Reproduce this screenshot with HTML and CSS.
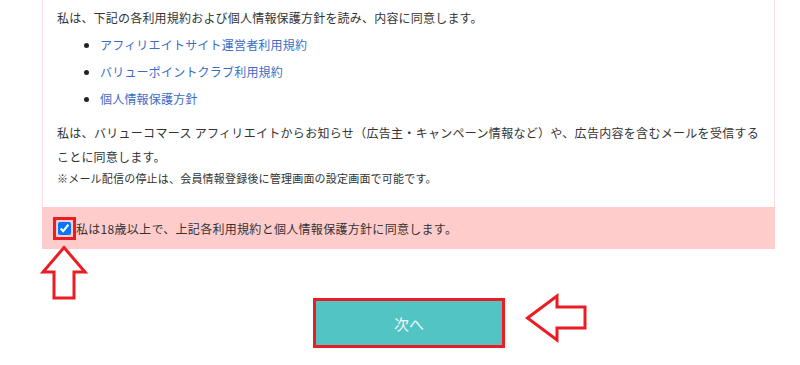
FILE: index.html
```html
<!DOCTYPE html>
<html lang="ja">
<head>
<meta charset="utf-8">
<link rel="stylesheet" href="styles.css">
</head>
<body>
<div class="page">
  <div class="panel">
    <div class="content">
      <p class="lead">私は、下記の各利用規約および個人情報保護方針を読み、内容に同意します。</p>
      <ul class="links">
        <li><a href="#">アフィリエイトサイト運営者利用規約</a></li>
        <li><a href="#">バリューポイントクラブ利用規約</a></li>
        <li><a href="#">個人情報保護方針</a></li>
      </ul>
      <p class="mail">私は、バリューコマース アフィリエイトからお知らせ（広告主・キャンペーン情報など）や、広告内容を含むメールを受信することに同意します。</p>
      <p class="note">※メール配信の停止は、会員情報登録後に管理画面の設定画面で可能です。</p>
    </div>
    <label class="agree">
      <input type="checkbox" class="check" checked>
      <span class="agree-text">私は18歳以上で、上記各利用規約と個人情報保護方針に同意します。</span>
    </label>
    <div class="actions">
      <button class="next" type="button">次へ</button>
    </div>
  </div>
  <svg class="arrow-up" width="50" height="60" viewBox="40 244 50 60">
    <polygon points="64,247.5 85,272 74,272 74,298 54,298 54,272 43,272" fill="#fff" stroke="#ec1c24" stroke-width="3" stroke-linejoin="miter"/>
  </svg>
  <svg class="arrow-left" width="66" height="50" viewBox="522 293 66 50">
    <polygon points="527.5,318 557,296 557,307 585,307 585,328 557,328 557,340" fill="#fff" stroke="#ec1c24" stroke-width="3" stroke-linejoin="miter"/>
  </svg>
</div>
</body>
</html>
```
FILE: styles.css
```css
html, body {
  margin: 0;
  padding: 0;
  background: #ffffff;
}
body {
  font-family: "Noto Sans CJK JP", "Noto Sans", sans-serif;
  color: #333333;
  font-size: 12px;
}
.page {
  position: relative;
  width: 800px;
  height: 365px;
  overflow: hidden;
}
.panel {
  margin-left: 42px;
  width: 733px;
}
.content {
  border-left: 1px solid #fbdde2;
  border-right: 1px solid #fbdde2;
  padding: 4px 15px 20px 14px;
}
.lead {
  margin: 0;
  line-height: 27px;
  letter-spacing: 0.2px;
}
.links {
  margin: 0;
  padding-left: 43px;
  line-height: 27px;
  letter-spacing: 0.2px;
}
.links li::marker {
  color: #222222;
}
.links a {
  color: #3a6cc4;
  text-decoration: none;
}
.mail {
  margin: 9px 0 0;
  line-height: 24px;
  text-align: justify;
  letter-spacing: 0.2px;
}
.note {
  margin: 0;
  font-size: 11px;
  line-height: 18px;
  letter-spacing: 0.2px;
}
.agree {
  display: flex;
  align-items: center;
  height: 42px;
  background: #ffcccc;
  padding-left: 12px;
}
.agree-text {
  letter-spacing: 0.3px;
}
.check {
  width: 13px;
  height: 13px;
  margin: 0 5px 0 4px;
  outline: 3px solid #ec1c24;
  outline-offset: 2px;
}
.actions {
  display: flex;
  justify-content: center;
  padding-top: 49px;
}
.next {
  width: 192px;
  height: 50px;
  border: 3px solid #ec1c24;
  background: #52c4c4;
  color: #eefafa;
  font-family: "Noto Sans CJK JP", "Noto Sans", sans-serif;
  font-size: 15px;
  padding: 0;
  margin-left: 1px;
}
.arrow-up {
  position: absolute;
  left: 40px;
  top: 244px;
}
.arrow-left {
  position: absolute;
  left: 522px;
  top: 293px;
}
```
